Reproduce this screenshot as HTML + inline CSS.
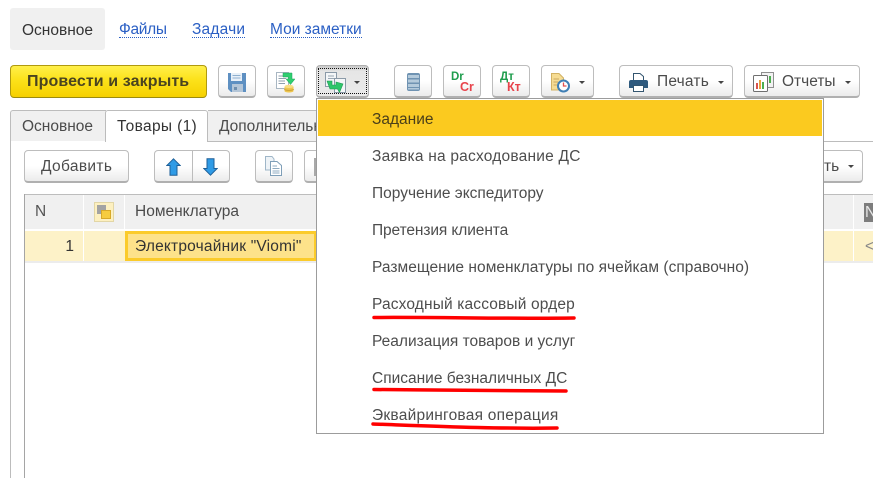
<!DOCTYPE html>
<html><head><meta charset="utf-8"><style>
html,body{margin:0;padding:0;background:#fff}
#p{position:relative;width:873px;height:478px;overflow:hidden;font-family:"Liberation Sans",sans-serif;font-size:15.5px;color:#4b4b4b;background:#fff}
#p div,#p svg{position:absolute}
.t{white-space:nowrap;line-height:18px;margin-top:2px}
.l{color:#2a5fc4;border-bottom:1px dotted #2a5fc4;line-height:15px;white-space:nowrap}
.b{box-sizing:border-box;height:33px;top:65px;border:1px solid #bdbdbd;border-bottom:2px solid #b0b0b0;border-radius:4px;background:linear-gradient(#fff 0,#fff 50%,#ebebeb 100%)}
.c{width:0;height:0;border-left:3px solid transparent;border-right:3px solid transparent;border-top:3px solid #444}
.m{left:372px;white-space:nowrap;line-height:18px;margin-top:2px;color:#4d4d4d}
.h{background:#f0f0f0}
</style></head><body><div id="p">

<div style="left:10px;top:8px;width:95px;height:42px;background:#f0f0f0;border-radius:3px"></div>
<div class="t" style="left:22px;top:20px;color:#333">Основное</div>
<div class="l" style="left:119px;top:22px;letter-spacing:-.3px">Файлы</div>
<div class="l" style="left:192px;top:22px;letter-spacing:.2px">Задачи</div>
<div class="l" style="left:270px;top:22px">Мои заметки</div>

<div class="b" style="left:10px;width:197px;border:1px solid #b09a10;border-bottom:1px solid #9a8a10;background:linear-gradient(#fff04a 0,#fce21a 45%,#f6d000 100%)"></div>
<div class="t" style="left:27px;top:71px;font-size:16px;letter-spacing:.1px;font-weight:bold;color:#4a4420">Провести и закрыть</div>

<div class="b" style="left:218px;width:38px"></div>
<svg style="left:228px;top:73px" width="18" height="19" viewBox="0 0 18 19"><path d="M0 0H18V19H3L0 16Z" fill="#5e90c2"/><rect x="3" y="0" width="11" height="8" fill="#e8f0f8"/><path d="M4.500 2.500H12.500M4.500 5H12.500" stroke="#8fb0cf"/><rect x="4" y="11" width="11" height="8" fill="#b4c6d8"/><rect x="6" y="14" width="3" height="3" fill="#6f8fae"/></svg>

<div class="b" style="left:267px;width:38px"></div>
<svg style="left:276px;top:72px" width="19" height="21" viewBox="0 0 19 21"><rect x="0.500" y="0.500" width="12" height="16" fill="#fff" stroke="#a8b6c2"/><path d="M2.500 4H10M2.500 6.500H10M2.500 9H9M2.500 11.500H9" stroke="#8f9fad"/><path d="M7 1H16V7H19L14.500 12.500L10 7H12.500V5H7Z" fill="#2fcf6f" stroke="#1f9f5a" stroke-width=".5"/><ellipse cx="13" cy="14.500" rx="4.500" ry="1.800" fill="#f7de85"/><path d="M8.500 14.500V19C8.500 21 17.500 21 17.500 19V14.500C17.500 16.500 8.500 16.500 8.500 14.500Z" fill="#efc64f"/><path d="M8.500 17C8.500 18.800 17.500 18.800 17.500 17" stroke="#c9a033" fill="none"/></svg>

<div class="b" style="left:316px;width:53px;background:linear-gradient(#c9c9c9,#e6e6e6 18%,#eaeaea);border-color:#b0b0b0"></div>
<div style="left:318px;top:68px;width:49px;height:26px;box-sizing:border-box;border:1px dotted #111"></div>
<svg style="left:325px;top:72px" width="21" height="21" viewBox="0 0 21 21"><rect x="0.500" y="0.500" width="11" height="14" fill="#f4f6f8" stroke="#8b9aa8"/><path d="M3 4H9M3 6.500H9" stroke="#9aa8b5"/><rect x="9.500" y="6.500" width="11" height="14" fill="#f4f6f8" stroke="#8b9aa8"/><path d="M2 9H7V13H11V10L18 12L14.500 20.500L12.500 17H5Z" fill="#2fc56b" stroke="#1e9a52" stroke-width=".6"/></svg>
<div class="c" style="left:354px;top:81px"></div>

<div class="b" style="left:394px;width:38px"></div>
<svg style="left:407px;top:73px" width="13" height="18" viewBox="0 0 13 18"><rect width="13" height="18" rx="2" fill="#6f93b2"/><path d="M1 2H12V5H1ZM1 6.500H12V9.500H1ZM1 11H12V14H1ZM1 15H12V16.500H1Z" fill="#b4cadb"/></svg>

<div class="b" style="left:443px;width:38px"></div>
<div style="left:451px;top:71px;font-size:11.500px;font-weight:bold;color:#1f9d4d;line-height:13px">Dr</div>
<div style="left:460px;top:80px;font-size:12.500px;font-weight:bold;color:#e8434b;line-height:14px">Cr</div>

<div class="b" style="left:492px;width:38px"></div>
<div style="left:500px;top:71px;font-size:11.500px;font-weight:bold;color:#1f9d4d;line-height:13px">Дт</div>
<div style="left:507px;top:80px;font-size:12.500px;font-weight:bold;color:#e8434b;line-height:14px">Кт</div>

<div class="b" style="left:541px;width:53px"></div>
<svg style="left:551px;top:73px" width="19" height="20" viewBox="0 0 19 20"><path d="M0.500 0.500H8L12.500 5V17H0.500Z" fill="#f6dc93" stroke="#d2b264"/><path d="M2.500 6H8M2.500 9H7M2.500 12H6" stroke="#c9a860"/><circle cx="12.500" cy="13" r="5.500" fill="#fff" stroke="#3f7fb5" stroke-width="2"/><path d="M12.500 9.500V13H15.500" stroke="#e2504f" stroke-width="1.300" fill="none"/></svg>
<div class="c" style="left:579px;top:81px"></div>

<div class="b" style="left:619px;width:114px"></div>
<svg style="left:629px;top:73px" width="19" height="19" viewBox="0 0 19 19"><path d="M4.500 .5H11L14.500 3.500V8H4.500Z" fill="#fff" stroke="#33556f"/><path d="M2 7H17Q19 7 19 9V15H0V9Q0 7 2 7Z" fill="#2f5a7e"/><rect x="4.500" y="12.500" width="10" height="6" fill="#fff" stroke="#33556f"/></svg>
<div class="t" style="left:657px;top:71px;letter-spacing:.2px">Печать</div>
<div class="c" style="left:718px;top:81px"></div>

<div class="b" style="left:744px;width:116px"></div>
<svg style="left:753px;top:72px" width="21" height="20" viewBox="0 0 21 20"><rect x="8.500" y=".5" width="12" height="15" fill="#f2f2f2" stroke="#8f8f8f"/><rect x=".5" y="3.500" width="14" height="16" rx="1" fill="#fff" stroke="#6f6f6f"/><rect x="3" y="11" width="2" height="6" fill="#d9534f"/><rect x="6" y="8" width="2" height="9" fill="#e8a33d"/><rect x="9" y="10" width="2" height="7" fill="#4caf50"/><rect x="16" y="4" width="2" height="7" fill="#4caf50"/></svg>
<div class="t" style="left:782px;top:71px">Отчеты</div>
<div class="c" style="left:845px;top:81px"></div>

<!-- tabs -->
<div style="left:10px;top:110px;width:96px;height:31px;box-sizing:border-box;background:#f0f0f0;border:1px solid #bcbcbc;border-bottom:none;border-right:none;border-radius:3px 0 0 0"></div>
<div class="t" style="left:22px;top:116px">Основное</div>
<div style="left:105px;top:110px;width:103px;height:32px;box-sizing:border-box;background:#fff;border:1px solid #bcbcbc;border-bottom:none;border-radius:3px 3px 0 0;z-index:2"></div>
<div class="t" style="left:117px;top:116px;z-index:3;color:#333;letter-spacing:.35px">Товары (1)</div>
<div style="left:208px;top:110px;width:120px;height:31px;box-sizing:border-box;background:#f0f0f0;border:1px solid #bcbcbc;border-bottom:none;border-left:none"></div>
<div class="t" style="left:219px;top:116px">Дополнительные</div>
<div style="left:208px;top:141px;width:665px;height:1px;background:#bcbcbc"></div>
<div style="left:10px;top:141px;width:1px;height:337px;background:#bcbcbc"></div>

<!-- toolbar row -->
<div class="b" style="left:24px;top:150px;width:105px"></div>
<div class="t" style="left:41px;top:156px;letter-spacing:.35px">Добавить</div>
<div class="b" style="left:154px;top:150px;width:76px"></div>
<div style="left:192px;top:151px;width:1px;height:30px;background:#bcbcbc"></div>
<svg style="left:166px;top:158px" width="15" height="18" viewBox="0 0 15 18"><path d="M7.500 .8L14.200 7.500H11V17.200H4V7.500H.8Z" fill="#2f9be6" stroke="#1d5f98"/></svg>
<svg style="left:203px;top:158px" width="15" height="18" viewBox="0 0 15 18"><path d="M7.500 17.200L14.200 10.500H11V.8H4V10.500H.8Z" fill="#2f9be6" stroke="#1d5f98"/></svg>
<div class="b" style="left:255px;top:150px;width:38px"></div>
<svg style="left:265px;top:156px" width="17" height="20" viewBox="0 0 17 20"><path d="M.5.5H7L9 3V14H.5Z" fill="#eef3f7" stroke="#9fb6c8"/><path d="M5.500 5.500H12L16.500 9.500V19.500H5.500Z" fill="#fff" stroke="#7f9fb8"/><path d="M7.500 10H12M7.500 12.500H14.500M7.500 15H14.500M7.500 17H14.500" stroke="#8fabc0"/></svg>
<div class="b" style="left:304px;top:150px;width:30px"></div>
<div style="left:314px;top:158px;width:3px;height:18px;background:#a9a9a9"></div>
<div class="b" style="left:760px;top:150px;width:103px"></div>
<div class="t" style="left:824px;top:156px">ть</div>
<div class="c" style="left:848px;top:165px"></div>

<!-- table -->
<div style="left:24px;top:194px;width:849px;height:1px;background:#bdbdbd"></div>
<div style="left:24px;top:194px;width:1px;height:284px;background:#a5a5a5"></div>
<div class="h" style="left:25px;top:195px;width:58px;height:34px"></div>
<div class="h" style="left:84px;top:195px;width:40px;height:34px"></div>
<div class="h" style="left:125px;top:195px;width:748px;height:34px"></div>
<div class="t" style="left:35px;top:201px;color:#555">N</div>
<div style="left:94px;top:202px;width:20px;height:20px;box-sizing:border-box;background:#fdf0c0;border:1px solid #e2d6a6"></div>
<div style="left:97px;top:205px;width:9px;height:9px;background:#a3a3a3"></div>
<div style="left:101px;top:210px;width:10px;height:9px;box-sizing:border-box;background:#f6cc3f;border:1px solid #d8a928"></div>
<div class="t" style="left:135px;top:201px">Номенклатура</div>

<div style="left:25px;top:231px;width:848px;height:30px;background:#fdf2c8"></div>
<div style="left:83px;top:231px;width:1px;height:30px;background:#fff"></div>
<div style="left:25px;top:261px;width:848px;height:2px;background:#ececec"></div>
<div class="t" style="left:25px;width:49px;text-align:right;top:236px;color:#333">1</div>
<div style="left:125px;top:231px;width:192px;height:30px;box-sizing:border-box;background:#fde28a;border:3px solid #fbcb2a"></div>
<div class="t" style="left:135px;top:236px;color:#333;letter-spacing:.2px">Электрочайник "Viomi"</div>
<div style="left:853px;top:195px;width:1px;height:66px;background:#fff"></div>
<div style="left:864px;top:203px;width:9px;height:19px;background:#7d7d7d"></div>
<div class="t" style="left:865px;top:202px;color:#e8e8e8">N</div>
<div class="t" style="left:865px;top:236px;color:#888">&lt;</div>

<!-- menu -->
<div style="left:316px;top:98px;width:508px;height:336px;box-sizing:border-box;background:#fff;border:1px solid #9c9c9c;z-index:5"></div>
<div style="left:318px;top:100px;width:504px;height:36px;background:#fbca1f;z-index:6"></div>
<div style="left:0;top:0;width:873px;height:478px;z-index:7">
<div class="m" style="top:109px;color:#4a3f1a">Задание</div>
<div class="m" style="top:146px;letter-spacing:.22px">Заявка на расходование ДС</div>
<div class="m" style="top:183px">Поручение экспедитору</div>
<div class="m" style="top:220px;letter-spacing:-.1px">Претензия клиента</div>
<div class="m" style="top:257px;letter-spacing:.04px">Размещение номенклатуры по ячейкам (справочно)</div>
<div class="m" style="top:294px;letter-spacing:.15px">Расходный кассовый ордер</div>
<div class="m" style="top:331px">Реализация товаров и услуг</div>
<div class="m" style="top:368px">Списание безналичных ДС</div>
<div class="m" style="top:405px;letter-spacing:.24px">Эквайринговая операция</div>
<svg style="left:0;top:0" width="873" height="478"><g stroke="#f00" stroke-width="3.500" stroke-linecap="round" fill="none"><path d="M374 317.500C440 317 510 319 574 318"/><path d="M374 389.500C440 390 510 391 566 391"/><path d="M373 424C430 426 500 429 557 428"/></g></svg>
</div>
</div></body></html>
